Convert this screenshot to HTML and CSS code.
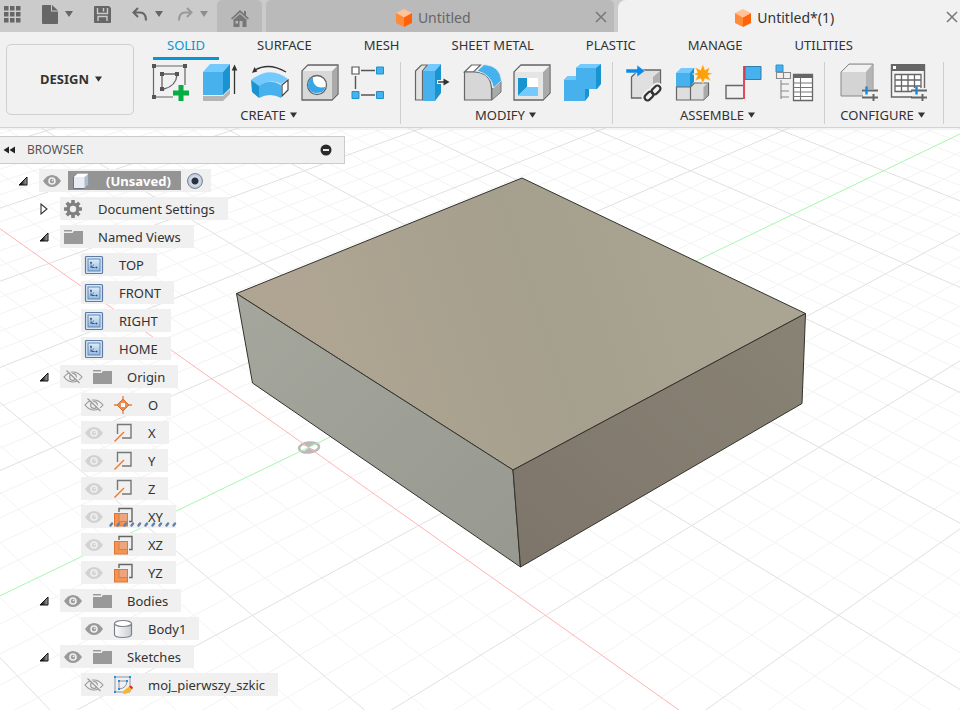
FILE: index.html
```html
<!DOCTYPE html>
<html lang="en">
<head>
  <meta charset="UTF-8">
  <meta name="viewport" content="width=device-width, initial-scale=1">
  <title>Untitled*(1)</title>
  <link rel="stylesheet" href="styles.css">
</head>
<body>
  <!-- shared icons -->
  <svg class="defs" width="0" height="0" aria-hidden="true">
    <defs>
      <linearGradient id="view-fill" x1="0" y1="0" x2="0" y2="1">
        <stop offset="0" stop-color="#dfeefb"/><stop offset="1" stop-color="#8fb9e2"/>
      </linearGradient>
      <linearGradient id="body-fill" x1="0" y1="0" x2="1" y2="0">
        <stop offset="0" stop-color="#fff"/><stop offset="1" stop-color="#c9ccd2"/>
      </linearGradient>
      <linearGradient id="toggle-fill" x1="0" y1="0" x2="1" y2="0">
        <stop offset="0.3" stop-color="#222"/><stop offset="1" stop-color="#aaa"/>
      </linearGradient>
      <symbol id="caret" viewBox="0 0 8 6"><path d="M0 0h8L4 6z" fill="currentColor"/></symbol>
      <symbol id="close" viewBox="0 0 12 12"><path d="M1 1l10 10M11 1L1 11" stroke="currentColor" stroke-width="1.500" fill="none"/></symbol>
      <symbol id="cube" viewBox="0 0 18 18">
        <path d="M9 0l8 4-8 4.500L1 4z" fill="#ffc299"/>
        <path d="M1 4l8 4.500V18l-8-4z" fill="#ff8a3a"/>
        <path d="M17 4L9 8.500V18l8-4z" fill="#ff6208"/>
      </symbol>
      <symbol id="open" viewBox="0 0 10 10"><path d="M9 1v8H1z" fill="url(#toggle-fill)" stroke="#111"/></symbol>
      <symbol id="shut" viewBox="0 0 10 12"><path d="M2 1v10l6-5z" fill="#fff" stroke="#333" stroke-width="1.100"/></symbol>
      <symbol id="eye" viewBox="0 0 20 14">
        <path d="M1 7Q5 1 10 1t9 6q-4 6-9 6T1 7z" fill="currentColor"/>
        <circle cx="10" cy="7" r="3.800" fill="#f0f0f0"/><circle cx="10" cy="7" r="2.200" fill="currentColor"/>
        <circle cx="10.600" cy="6.400" r="0.900" fill="#f0f0f0"/>
      </symbol>
      <symbol id="eye-off" viewBox="0 0 20 14">
        <path d="M1 7Q5 2 10 2t9 5q-4 5-9 5T1 7z" fill="none" stroke="#999" stroke-width="1.200"/>
        <circle cx="10" cy="7" r="3.300" fill="none" stroke="#999" stroke-width="1.200"/>
        <path d="M4.500 0.500l13 12" stroke="#f0f0f0" stroke-width="2"/><path d="M3.500 0.500l13 12.500" stroke="#999" stroke-width="1.200"/>
      </symbol>
      <symbol id="folder" viewBox="0 0 20 16">
        <path d="M1 1h8v1.500H1zM1 4h8.500l1.500-2h9v13H1z" fill="#999"/>
      </symbol>
      <symbol id="gear" viewBox="0 0 20 20">
        <g stroke="#808080" stroke-width="3.600"><path d="M10 1v18M1 10h18M3.700 3.700l12.600 12.600M16.300 3.700L3.700 16.300"/></g>
        <circle cx="10" cy="10" r="6.500" fill="#808080"/><circle cx="10" cy="10" r="3.200" fill="#f0f0f0"/>
      </symbol>
      <symbol id="view" viewBox="0 0 20 20">
        <rect x="1.500" y="1.500" width="17" height="17" rx="1" fill="#d5e7f7" stroke="#5c7ba6" stroke-width="1.200"/>
        <rect x="4" y="4" width="12" height="12" fill="url(#view-fill)" stroke="#6586b0"/>
        <path d="M7 7v5.500h6M7 12.500l3-3" fill="none" stroke="#2d4465" stroke-width="0.900" stroke-dasharray="2.500 .8"/>
        <path d="M6 8.200L7 6.200l1 2zM12 11.500l1.800 1-1.800 1z" fill="#2d4465"/>
      </symbol>
      <symbol id="point" viewBox="0 0 20 20">
        <path d="M10 1v18M1 10h18" stroke="#e58144" stroke-width="1.300"/>
        <path d="M10 4l6 6-6 6-6-6z" fill="#ec8b50" stroke="#d9722f"/><rect x="8" y="8" width="4" height="4" fill="#fff"/>
      </symbol>
      <symbol id="axis" viewBox="0 0 20 20">
        <path d="M4.500 11V1.500h13.500v13.500H9" fill="none" stroke="#777" stroke-width="1.400"/>
        <path d="M1.500 18.500L11 9" stroke="#f07b28" stroke-width="1.400"/>
      </symbol>
      <symbol id="plane" viewBox="0 0 20 20">
        <path d="M6 5V1.500h13v13h-3" fill="none" stroke="#666" stroke-width="1.400"/>
        <rect x="1.500" y="6.500" width="13" height="12.500" fill="#f39354" stroke="#dd7635"/>
        <rect x="6" y="6.500" width="8.500" height="8" fill="#eaa67e" stroke="#dd7635" stroke-width="0.800"/>
      </symbol>
      <symbol id="solid-body" viewBox="0 0 20 20">
        <path d="M1.500 4.500v11c0 4 17 4 17 0v-11" fill="url(#body-fill)" stroke="#7d828a" stroke-width="1.200"/>
        <ellipse cx="10" cy="4.500" rx="8.500" ry="3" fill="#fff" stroke="#7d828a" stroke-width="1.200"/>
      </symbol>
      <symbol id="component" viewBox="0 0 18 18">
        <path d="M1.500 5l4-3.500h11v11l-4 4h-11z" fill="#e8edf4" stroke="#6c7480"/>
        <path d="M12.500 5l4-3.500v11l-4 4z" fill="#b1bac7"/><path d="M2 5h10.500l4-3.500H5.500z" fill="#fff"/>
      </symbol>
      <symbol id="sketch" viewBox="0 0 20 20">
        <path d="M2 2h15v15H2zM6 6h8q0 7-8 8z" fill="none" stroke="#8a96a1" stroke-width="1"/>
        <path d="M1 1h2v2H1zM16 1h2v2h-2zM1 16h2v2H1zM5 5h2v2H5zM13 5h2v2h-2zM5 13h2v2H5z" fill="#1d91e8"/>
        <path d="M10 19l1-3.500 5-4 3 3-5 4z" fill="#f8b52c"/><path d="M16 11.500l2-1 2 2-1 2z" fill="#e02a2a"/>
      </symbol>
    </defs>
  </svg>

  <header class="titlebar">
    <div class="quick-tools">
      <button class="quick grid-btn" aria-label="Data panel">
        <svg width="18" height="18" viewBox="0 0 18 18" fill="#666"><path d="M1 1h4.500v4.500H1zM7 1h4.500v4.500H7zM13 1h4.500v4.500h-4.500zM1 7h4.500v4.500H1zM7 7h4.500v4.500H7zM13 7h4.500v4.500h-4.500zM1 13h4.500v4.500H1zM7 13h4.500v4.500H7zM13 13h4.500v4.500h-4.500z"/></svg>
      </button>
      <button class="quick" aria-label="File">
        <svg width="16" height="19" viewBox="0 0 16 19" fill="#666"><path d="M0 1q0-1 1-1h8v6.500h7V18q0 1-1 1H1q-1 0-1-1z"/><path d="M10 0l6 5.500h-6z"/></svg>
        <svg class="caret" width="8" height="6"><use href="#caret"/></svg>
      </button>
      <button class="quick save-btn" aria-label="Save">
        <svg width="17" height="17" viewBox="0 0 17 17"><path d="M0 1q0-1 1-1h14l2 2v14q0 1-1 1H1q-1 0-1-1z" fill="#666"/><path d="M3.500 2v5.500h10V2M4 15v-4.500h9V15" fill="none" stroke="#cbcbcb" stroke-width="1.400"/><path d="M9.500 2v3.500" stroke="#cbcbcb" stroke-width="1.500"/></svg>
      </button>
      <button class="quick" aria-label="Undo">
        <svg width="16" height="15" viewBox="0 0 16 15"><path d="M6 1L1.500 5.500 6 10M2 5.500h6q6 0 6 8" fill="none" stroke="#666" stroke-width="2"/></svg>
        <svg class="caret" width="8" height="6"><use href="#caret"/></svg>
      </button>
      <button class="quick faded" aria-label="Redo">
        <svg width="16" height="15" viewBox="0 0 16 15"><path d="M10 1l4.500 4.500L10 10M14 5.500H8q-6 0-6 8" fill="none" stroke="#999" stroke-width="2"/></svg>
        <svg class="caret" width="8" height="6"><use href="#caret"/></svg>
      </button>
    </div>
    <nav class="doc-tabs">
      <a class="home-tab" href="#" aria-label="Home">
        <svg width="18" height="17" viewBox="0 0 18 17" fill="#777"><path d="M9 0L0 8.500l1.200 1L9 2.500l7.800 7 1.200-1-3-3V1h-2v2.800z"/><path d="M2.500 9.500L9 4l6.500 5.500V17h-4v-6h-3v6h-6z"/><path d="M4.500 11h2.500v2.500h-2.500z" fill="#bababa"/></svg>
      </a>
      <div class="doc-tab">
        <a class="doc-name" href="#"><svg width="18" height="18"><use href="#cube"/></svg>Untitled</a>
        <button class="close-btn" aria-label="Close Untitled"><svg width="12" height="12"><use href="#close"/></svg></button>
      </div>
      <div class="doc-tab active">
        <a class="doc-name" href="#"><svg width="18" height="18"><use href="#cube"/></svg>Untitled*(1)</a>
        <button class="close-btn" aria-label="Close Untitled*(1)"><svg width="12" height="12"><use href="#close"/></svg></button>
      </div>
    </nav>
  </header>

  <section class="ribbon">
    <button class="workspace">DESIGN <svg width="7" height="6"><use href="#caret"/></svg></button>
    <div class="ribbon-main">
      <nav class="ribbon-tabs">
        <a class="ribbon-tab current" href="#">SOLID</a>
        <a class="ribbon-tab" href="#">SURFACE</a>
        <a class="ribbon-tab" href="#">MESH</a>
        <a class="ribbon-tab" href="#">SHEET METAL</a>
        <a class="ribbon-tab" href="#">PLASTIC</a>
        <a class="ribbon-tab" href="#">MANAGE</a>
        <a class="ribbon-tab" href="#">UTILITIES</a>
      </nav>
      <div class="tool-groups">
        <div class="tool-group">
          <div class="tools">
            <button class="tool" aria-label="Create sketch">
              <svg viewBox="0 0 40 40"><path d="M6 4h27M3.500 6v27M35 6v17M6 35h17" fill="none" stroke="#666" stroke-width="1.200"/><path d="M14 12h11M12 14v11M27 13q-1 11-13 14" fill="none" stroke="#666" stroke-width="1.300"/><path d="M2 2h4v4H2zM33 2h4v4h-4zM2 33h4v4H2zM10 10h4v4h-4zM25 10h4v4h-4zM10 25h4v4h-4z" fill="#555"/><path d="M28.500 23h5v5.500h5.500v5h-5.500v5.500h-5v-5.500h-5.500v-5h5.500z" fill="#06ad43"/></svg>
            </button>
            <button class="tool" aria-label="Extrude">
              <svg viewBox="0 0 40 40"><path d="M3 34h20l7-7v5l-7 7H3z" fill="#b5b5b5"/><path d="M3 10l7-8h20l-7 8z" fill="#74caff"/><path d="M3 10h20v23H3z" fill="#46b1ec"/><path d="M23 10l7-8v24l-7 7z" fill="#1a94d0"/><path d="M34.500 32V5" stroke="#333" stroke-width="1.300"/><path d="M34.500 2.500l2.800 6h-5.600z" fill="#333"/></svg>
            </button>
            <button class="tool" aria-label="Revolve">
              <svg viewBox="0 0 40 40"><path d="M1 18Q20 3 38 17l-7 5q-12-6-22 3z" fill="#74caff"/><path d="M1 18l8 6v12l-7-6z" fill="#1a94d0"/><path d="M9 24q11-8 22-1v13q-11-6-22 0z" fill="#46b1ec"/><path d="M32 23l6-5v10l-6 6z" fill="#fff" stroke="#444" stroke-width="1.200"/><path d="M5 8q14-8 31 2" fill="none" stroke="#333" stroke-width="1.400"/><path d="M2 11l2.500-6 2.800 4.500z" fill="#333"/></svg>
            </button>
            <button class="tool" aria-label="Hole">
              <svg viewBox="0 0 40 40"><path d="M2 9l6-6h30v29l-6 6H2z" fill="#d8d8d8" stroke="#666" stroke-width="1.300"/><path d="M32 9l5-5v28l-5 5z" fill="#aaa"/><path d="M3 9l5-5h29l-5 5z" fill="#f2f2f2"/><circle cx="17" cy="23" r="9.500" fill="#fff" stroke="#666" stroke-width="1.300"/><path d="M13 15c-8 5-6 16 4 16 5 0 8-3 8-6-8 2-13-3-12-10z" fill="#38a7e8"/></svg>
            </button>
            <button class="tool" aria-label="Rectangular pattern">
              <svg viewBox="0 0 40 40"><path d="M11 8.500h14M5.500 14v13M11 33h14" stroke="#555" stroke-width="1.400"/><path d="M2 5h7v7H2z" fill="#fff" stroke="#555" stroke-width="1.200"/><path d="M26.500 5h7v7h-7zM2 29.500h7v7H2zM26.500 29.500h7v7h-7z" fill="#46b1ec" stroke="#1a94d0"/></svg>
            </button>
          </div>
          <button class="group-menu">CREATE <svg width="7" height="6"><use href="#caret"/></svg></button>
        </div>
        <div class="tool-group">
          <div class="tools">
            <button class="tool" aria-label="Press pull">
              <svg viewBox="0 0 40 40"><path d="M3.500 9l6-6h6l-5 6v29h-7z" fill="#e3e3e3" stroke="#666" stroke-width="1.200"/><path d="M11 9l6-7h12l-6 7z" fill="#74caff"/><path d="M11 9h12v30H11z" fill="#46b1ec"/><path d="M23 9l6-7v29l-6 8z" fill="#1a94d0"/><path d="M25 20h8" stroke="#f1f1f1" stroke-width="4"/><path d="M26 20h8" stroke="#333" stroke-width="1.400"/><path d="M31.500 16.500l6 3.500-6 3.500z" fill="#333"/></svg>
            </button>
            <button class="tool" aria-label="Fillet">
              <svg viewBox="0 0 40 40"><path d="M2.500 10l7-7h9l-7 7z" fill="#fff" stroke="#666" stroke-width="1.200"/><path d="M2.500 10h9q17 0 18 16v12h-27z" fill="#d7d7d7" stroke="#666" stroke-width="1.200"/><path d="M30 27l9-8v11l-9 8z" fill="#aaa" stroke="#777"/><path d="M15 9l7-6.500q16 1 17.500 16l-8 7.500Q29 12 15 9z" fill="#46b1ec" stroke="#f1f1f1" stroke-width="0.800"/></svg>
            </button>
            <button class="tool" aria-label="Shell">
              <svg viewBox="0 0 40 40"><path d="M2 10l7-7h29v28l-7 7H2z" fill="#e5e5e5" stroke="#666" stroke-width="1.300"/><path d="M31 10l6-6v27l-6 6z" fill="#aaa"/><path d="M3 10l6-6h28l-6 6z" fill="#f3f3f3"/><path d="M6 16h20v18H6z" fill="#fff"/><path d="M6 16h9v9l-9 9z" fill="#1a94d0"/><path d="M6 34l9-9h11v9z" fill="#74caff"/></svg>
            </button>
            <button class="tool" aria-label="Combine">
              <svg viewBox="0 0 40 40"><path d="M2 18l4-4h8V6l5-4h20v20l-4 5h-8v7l-4 5H2z" fill="#1a94d0"/><path d="M2 18h12V6h20v21H23v12H2z" fill="#46b1ec"/><path d="M2 18l4-4h8v4zM14 6l5-4h20l-5 4z" fill="#74caff"/></svg>
            </button>
          </div>
          <button class="group-menu">MODIFY <svg width="7" height="6"><use href="#caret"/></svg></button>
        </div>
        <div class="tool-group">
          <div class="tools">
            <button class="tool" aria-label="Insert derive">
              <svg viewBox="0 0 40 40"><path d="M7.500 15l7-7h22v19l-8 9h-21z" fill="#e0e0e0" stroke="#666" stroke-width="1.300"/><path d="M29 15l7-6v17l-7 9z" fill="#b0b0b0"/><path d="M2 7h11V3l8 6-8 6v-4H2z" fill="#0a8bea" stroke="#f1f1f1" stroke-width="0.500"/><g fill="none"><g stroke="#f1f1f1" stroke-width="6"><rect x="-5" y="-3" width="10" height="6" rx="3" transform="translate(25 34) rotate(-45)"/><rect x="-5" y="-3" width="10" height="6" rx="3" transform="translate(32 28) rotate(-45)"/></g><g stroke="#333" stroke-width="2.300"><rect x="-5" y="-3" width="10" height="6" rx="3" transform="translate(25 34) rotate(-45)"/><rect x="-5" y="-3" width="10" height="6" rx="3" transform="translate(32 28) rotate(-45)"/></g></g></svg>
            </button>
            <button class="tool" aria-label="New component">
              <svg viewBox="0 0 40 40"><path d="M2 11l5-5h14l-4 5z" fill="#74caff"/><path d="M2 11h14v14H2z" fill="#46b1ec"/><path d="M16 11l4-5v14l-4 5z" fill="#1a94d0"/><path d="M2.500 25h14v13h-14zM16.500 25l4-4h14v12l-5 5h-13z" fill="#dedede" stroke="#666" stroke-width="1.200"/><path d="M29.500 25l4.500-4v12l-4.500 5z" fill="#aaa"/><path d="M29 2l2 6 5-3-2 5.500 5 1-5 2 3 5.500-6-2.500-2 5-2.500-5-5.500 2.500 2.500-5.500-5-1.500 5-1.500-2.500-5.500 5.500 3z" fill="#ffa008" stroke="#f1f1f1" stroke-width="0.600"/></svg>
            </button>
            <button class="tool" aria-label="Joint">
              <svg viewBox="0 0 40 40"><path d="M19 23.500H2v13h17" fill="none" stroke="#666" stroke-width="1.400"/><path d="M21 4.500h16v13H21z" fill="#46b1ec" stroke="#2b7ead"/><path d="M20 4v33" stroke="#e21e35" stroke-width="1.600"/></svg>
            </button>
            <button class="tool" aria-label="Bill of materials">
              <svg viewBox="0 0 40 40"><path d="M2 3h7v7H2z" fill="#46b1ec" stroke="#2794d1"/><path d="M2.500 10.500h7v6h-7zM9.500 10.500h7v6h-7zM7 18v19M7 22h8M7 29h8M7 35h8" fill="none" stroke="#888" stroke-width="1.100"/><path d="M19.500 12.500h19v26h-19z" fill="#fff" stroke="#666" stroke-width="1.300"/><path d="M19 12h20v4H19z" fill="#666"/><path d="M19 21h19M19 25.500h19M19 30h19M19 34.500h19M26.500 16v22" stroke="#777" stroke-width="1.100"/></svg>
            </button>
          </div>
          <button class="group-menu">ASSEMBLE <svg width="7" height="6"><use href="#caret"/></svg></button>
        </div>
        <div class="tool-group wide">
          <div class="tools">
            <button class="tool" aria-label="Configure">
              <svg viewBox="0 0 40 40"><path d="M2 10l8-8h24v27l-4 5H2z" fill="#d4d4d4" stroke="#888"/><path d="M3 10l7-7h23l-6 7z" fill="#f1f1f1"/><path d="M27 10l6-7v25l-6 5z" fill="#b5b5b5"/><path d="M24 27h15v10H24z" fill="#f1f1f1"/><path d="M23 28.500h16M23 35.500h16M34.500 32v7" stroke="#666" stroke-width="2"/><path d="M27.500 24.500v8" stroke="#0a8bea" stroke-width="2.400"/></svg>
            </button>
            <button class="tool" aria-label="Configuration table">
              <svg viewBox="0 0 40 40"><path d="M2.500 3h33v32h-33z" fill="#f5f5f5" stroke="#666" stroke-width="1.400"/><path d="M2 2h34v7H2z" fill="#666"/><path d="M4 4h3v3H4z" fill="#fff"/><path d="M6 12.500h26v17H6zM6 18h26M6 24h26M12.500 12v18M19 12v18M25.500 12v18" fill="#fff" stroke="#666" stroke-width="1.300"/><path d="M23 26h16v11H23z" fill="#f1f1f1"/><path d="M22 28.500h16M22 35.500h16M33.500 32v7" stroke="#666" stroke-width="2"/><path d="M27.500 24.500v8" stroke="#0a8bea" stroke-width="2.400"/></svg>
            </button>
          </div>
          <button class="group-menu">CONFIGURE <svg width="7" height="6"><use href="#caret"/></svg></button>
        </div>
      </div>
    </div>
  </section>

  <main class="viewport">
    <svg class="scene" viewBox="0 128 960 582" preserveAspectRatio="xMidYMid slice" role="img" aria-label="Body1">
      <defs>
        <linearGradient id="face-top" gradientUnits="userSpaceOnUse" x1="330" y1="400" x2="720" y2="270">
          <stop offset="0" stop-color="#afa592"/><stop offset="0.550" stop-color="#a59f8d"/><stop offset="1" stop-color="#aaa493"/>
        </linearGradient>
        <linearGradient id="face-left" x1="0" y1="0" x2="1" y2="1">
          <stop offset="0" stop-color="#a5a79d"/><stop offset="1" stop-color="#97988f"/>
        </linearGradient>
        <linearGradient id="face-right" x1="0" y1="1" x2="1" y2="0">
          <stop offset="0" stop-color="#7e756a"/><stop offset="1" stop-color="#888375"/>
        </linearGradient>
      </defs>
      <path id="grid-minor" class="minor"/>
      <path id="grid-major" class="major"/>
      <g transform="rotate(-6 309 447)">
        <ellipse cx="309" cy="447.500" rx="10" ry="5" fill="none" stroke="#bababa" stroke-width="2.500"/>
        <path d="M309 447.500l-7-4q7-2.500 14 0zM309 447.500l-7 4q7 2.500 14 0z" fill="#bababa"/>
      </g>
      <path id="axis-x" class="axis-x"/>
      <path id="axis-y" class="axis-y"/>
      <g stroke="#33322d" stroke-width="1" stroke-linejoin="round">
        <path d="M522 178L805.500 313.500 513 470 236.500 293.500z" fill="url(#face-top)"/>
        <path d="M236.500 293.500L513 470l7.500 97L252.500 383z" fill="url(#face-left)"/>
        <path d="M513 470l292.500-156.500-3.500 90L520.500 567z" fill="url(#face-right)"/>
      </g>
    </svg>

    <aside class="browser">
      <header class="browser-head">
        <button class="icon-btn" aria-label="Collapse"><svg width="13" height="8" viewBox="0 0 13 8" fill="#222"><path d="M6 0.500v7L0.500 4zM12 0.500v7L6.500 4z"/></svg></button>
        <h2>BROWSER</h2>
        <button class="icon-btn" aria-label="Minimize"><svg width="12" height="12" viewBox="0 0 12 12"><circle cx="6" cy="6" r="5.500" fill="#2b2b2b"/><path d="M3 6h6" stroke="#fff" stroke-width="1.800"/></svg></button>
      </header>

      <ul class="tree">
        <li>
          <div class="row">
            <button class="toggle" aria-label="Collapse document"><svg width="10" height="10"><use href="#open"/></svg></button>
            <div class="item root">
              <button class="eye" aria-label="Hide document"><svg><use href="#eye"/></svg></button>
              <label class="doc-label" for="activate"><svg width="18" height="18"><use href="#component"/></svg>(Unsaved)</label>
              <input class="activate" type="radio" id="activate" name="activate" checked>
            </div>
          </div>
          <ul>
            <li>
              <div class="row">
                <button class="toggle" aria-label="Expand Document Settings"><svg width="10" height="12"><use href="#shut"/></svg></button>
                <div class="item"><svg class="icon"><use href="#gear"/></svg><span>Document Settings</span></div>
              </div>
            </li>
            <li>
              <div class="row">
                <button class="toggle" aria-label="Collapse Named Views"><svg width="10" height="10"><use href="#open"/></svg></button>
                <div class="item"><svg class="icon"><use href="#folder"/></svg><span>Named Views</span></div>
              </div>
              <ul>
                <li class="row leaf"><div class="item"><svg class="icon"><use href="#view"/></svg><span>TOP</span></div></li>
                <li class="row leaf"><div class="item"><svg class="icon"><use href="#view"/></svg><span>FRONT</span></div></li>
                <li class="row leaf"><div class="item"><svg class="icon"><use href="#view"/></svg><span>RIGHT</span></div></li>
                <li class="row leaf"><div class="item"><svg class="icon"><use href="#view"/></svg><span>HOME</span></div></li>
              </ul>
            </li>
            <li>
              <div class="row">
                <button class="toggle" aria-label="Collapse Origin"><svg width="10" height="10"><use href="#open"/></svg></button>
                <div class="item"><button class="eye" aria-label="Show Origin"><svg><use href="#eye-off"/></svg></button><svg class="icon"><use href="#folder"/></svg><span>Origin</span></div>
              </div>
              <ul>
                <li class="row leaf"><div class="item"><button class="eye" aria-label="Show O"><svg><use href="#eye-off"/></svg></button><svg class="icon"><use href="#point"/></svg><span>O</span></div></li>
                <li class="row leaf"><div class="item"><button class="eye dim" aria-label="Hide X"><svg><use href="#eye"/></svg></button><svg class="icon"><use href="#axis"/></svg><span>X</span></div></li>
                <li class="row leaf"><div class="item"><button class="eye dim" aria-label="Hide Y"><svg><use href="#eye"/></svg></button><svg class="icon"><use href="#axis"/></svg><span>Y</span></div></li>
                <li class="row leaf"><div class="item"><button class="eye dim" aria-label="Hide Z"><svg><use href="#eye"/></svg></button><svg class="icon"><use href="#axis"/></svg><span>Z</span></div></li>
                <li class="row leaf"><div class="item"><button class="eye dim" aria-label="Hide XY"><svg><use href="#eye"/></svg></button><svg class="icon"><use href="#plane"/></svg><span>XY</span>
                  <svg class="hatch" width="68" height="5" viewBox="0 0 68 5"><path d="M1.500 3.500l1.500-2m5.500 2l1.500-2m5.500 2l1.500-2m5.500 2l1.500-2m5.500 2l1.500-2m5.500 2l1.500-2m5.500 2l1.500-2m5.500 2l1.500-2m5.500 2l1.500-2m5.500 2l1.500-2" fill="none" stroke="#5f82ac" stroke-width="2.400" stroke-linecap="round"/></svg></div></li>
                <li class="row leaf"><div class="item"><button class="eye dim" aria-label="Hide XZ"><svg><use href="#eye"/></svg></button><svg class="icon"><use href="#plane"/></svg><span>XZ</span></div></li>
                <li class="row leaf"><div class="item"><button class="eye dim" aria-label="Hide YZ"><svg><use href="#eye"/></svg></button><svg class="icon"><use href="#plane"/></svg><span>YZ</span></div></li>
              </ul>
            </li>
            <li>
              <div class="row">
                <button class="toggle" aria-label="Collapse Bodies"><svg width="10" height="10"><use href="#open"/></svg></button>
                <div class="item"><button class="eye" aria-label="Hide Bodies"><svg><use href="#eye"/></svg></button><svg class="icon"><use href="#folder"/></svg><span>Bodies</span></div>
              </div>
              <ul>
                <li class="row leaf"><div class="item"><button class="eye" aria-label="Hide Body1"><svg><use href="#eye"/></svg></button><svg class="icon"><use href="#solid-body"/></svg><span>Body1</span></div></li>
              </ul>
            </li>
            <li>
              <div class="row">
                <button class="toggle" aria-label="Collapse Sketches"><svg width="10" height="10"><use href="#open"/></svg></button>
                <div class="item"><button class="eye" aria-label="Hide Sketches"><svg><use href="#eye"/></svg></button><svg class="icon"><use href="#folder"/></svg><span>Sketches</span></div>
              </div>
              <ul>
                <li class="row leaf"><div class="item"><button class="eye" aria-label="Show moj_pierwszy_szkic"><svg><use href="#eye-off"/></svg></button><svg class="icon"><use href="#sketch"/></svg><span>moj_pierwszy_szkic</span></div></li>
              </ul>
            </li>
          </ul>
        </li>
      </ul>
    </aside>
  </main>
  <script src="grid.js"></script>
</body>
</html>
```

FILE: grid.js
```js
// Ground plane in perspective. u runs along the red axis, v along the green one,
// one unit is a major grid cell.
function project(u, v) {
  const scale = 1 / (0.003917 - 0.0002525 * (u - v));
  const x = 308.5 - 1.485 * (scale - 255.3) + (u + v) / 2 * scale;
  const y = 447.4 + 4.446 * (scale - 255.3);
  return x.toFixed(1) + ' ' + y.toFixed(1);
}

const EXTENT = 7;
const DIVISIONS = 5;

function lineU(u) {
  return 'M' + project(u, -EXTENT) + 'L' + project(u, EXTENT);
}

function lineV(v) {
  return 'M' + project(-EXTENT, v) + 'L' + project(EXTENT, v);
}

let minor = '';
let major = '';
for (let i = -EXTENT * DIVISIONS; i <= EXTENT * DIVISIONS; i++) {
  if (i === 0) continue;
  const lines = lineU(i / DIVISIONS) + lineV(i / DIVISIONS);
  if (i % DIVISIONS === 0) {
    major += lines;
  } else {
    minor += lines;
  }
}

document.getElementById('grid-minor').setAttribute('d', minor);
document.getElementById('grid-major').setAttribute('d', major);
document.getElementById('axis-x').setAttribute('d', lineV(0));
document.getElementById('axis-y').setAttribute('d', lineU(0));
```

FILE: styles.css
```css
* {
  box-sizing: border-box;
}
body {
  display: flex;
  flex-direction: column;
  min-height: 100vh;
  margin: 0;
  overflow: hidden;
  background: #fff;
  color: #333;
  font-family: 'Noto Sans', 'Open Sans', sans-serif;
  font-size: 13px;
  line-height: 18px;
}
svg {
  display: block;
  flex: none;
}
a {
  color: inherit;
  text-decoration: none;
}
button {
  display: flex;
  align-items: center;
  padding: 0;
  border: none;
  background: none;
  color: inherit;
  font: inherit;
  cursor: pointer;
}
ul {
  margin: 0;
  padding: 0;
  list-style: none;
}
.defs {
  position: absolute;
}

/* title bar */
.titlebar {
  display: flex;
  height: 32px;
  background: #cbcbcb;
}
.quick-tools {
  display: flex;
  gap: 21px;
  width: 217px;
  padding: 0 0 4px 3px;
  color: #666;
}
.quick {
  gap: 7px;
}
.faded {
  margin-left: -7px;
  color: #8d8d8d;
}
.doc-tabs {
  display: flex;
  flex: 1;
  gap: 4px;
}
.home-tab {
  display: flex;
  align-items: center;
  justify-content: center;
  width: 45px;
  padding-top: 4px;
  border-radius: 5px 5px 0 0;
  background: #bababa;
}
.doc-tab {
  display: flex;
  flex: 1;
  align-items: center;
  padding: 2px 7px 0 0;
  border-radius: 5px 5px 0 0;
  background: #bababa;
  color: #666;
}
.doc-tab.active {
  padding-right: 2px;
  border-radius: 8px 0 0 0;
  background: #f1f1f1;
  color: #333;
}
.doc-name {
  display: flex;
  flex: 1;
  align-items: center;
  justify-content: center;
  gap: 5px;
  padding: 2px 0 0 5px;
  font-size: 14px;
}
.close-btn {
  color: #777;
}

/* ribbon */
.ribbon {
  position: relative;
  display: flex;
  gap: 6px;
  padding: 4px 6px 3px;
  border-bottom: 1px solid #d4d4d4;
  background: #f1f1f1;
  box-shadow: 0 2px 0 #f4f4f4;
}
.workspace {
  justify-content: center;
  gap: 6px;
  width: 128px;
  height: 71px;
  margin-top: 8px;
  padding: 0 0 2px 2px;
  border: 1px solid #cfcfcf;
  border-radius: 5px;
  font-weight: 700;
}
.ribbon-main {
  flex: 1;
}
.ribbon-tabs {
  display: flex;
  gap: 24px;
  padding-left: 13px;
}
.ribbon-tab {
  padding: 0 14px 3px;
  border-bottom: 3px solid transparent;
}
.ribbon-tab.current {
  border-color: #0696d7;
  color: #0696d7;
}
.tool-groups {
  display: flex;
  margin-top: 2px;
}
.tool-group {
  padding: 0 10px 0 11px;
  border-right: 1px solid #cfcfcf;
}
.tool-group:first-child {
  padding-left: 10px;
}
.tool-group.wide {
  padding: 0 14px;
}
.tools {
  display: flex;
  gap: 10px;
}
.tool svg {
  width: 40px;
  height: 40px;
}
.group-menu {
  gap: 4px;
  margin: 4px auto 0;
  padding-right: 3px;
}

/* canvas and browser panel */
.viewport {
  position: relative;
  flex: 1;
  padding-top: 8px;
}
.scene {
  position: absolute;
  inset: 0;
  width: 100%;
  height: 100%;
}
.minor {
  stroke: #f3f3f3;
}
.major {
  stroke: #e0e0e0;
}
.axis-x {
  stroke: #ffb3b3;
}
.axis-y {
  stroke: #a5f7ae;
}
.browser {
  position: relative;
  width: 345px;
}
.browser-head {
  display: flex;
  align-items: center;
  gap: 11px;
  height: 28px;
  padding: 0 12px 0 3px;
  border: 1px solid #cbcbcb;
  border-left: none;
  background: #f0f0f0;
}
.browser-head h2 {
  flex: 1;
  margin: 0;
  color: #555;
  font-size: 12px;
  font-weight: 400;
}
.tree {
  padding: 5px 0 0 17px;
}
.tree ul {
  padding-left: 21px;
}
.row {
  display: flex;
  align-items: center;
  height: 23px;
  margin-bottom: 5px;
}
.leaf {
  padding-left: 22px;
}
.toggle {
  padding-left: 1px;
  width: 22px;
}
.item {
  position: relative;
  display: flex;
  align-items: center;
  height: 23px;
  padding: 0 13px 0 3px;
  background: #f0f0f0;
}
.item span {
  margin-left: 15px;
}
.icon {
  width: 20px;
  height: 20px;
}
.eye {
  margin-right: 9px;
  color: #999;
}
.eye svg {
  width: 20px;
  height: 14px;
}
.eye.dim {
  color: #d2d2d2;
}
.root {
  padding-right: 8px;
}
.root .eye {
  margin-right: 6px;
}
.doc-label {
  display: flex;
  align-items: center;
  gap: 16px;
  height: 19px;
  padding: 0 10px 0 4px;
  background: #949494;
  color: #fff;
  font-weight: 700;
}
.activate {
  width: 16px;
  height: 16px;
  margin: 0 0 0 6px;
  appearance: none;
  border: 1px solid #7b8494;
  border-radius: 50%;
  background: radial-gradient(circle, #2b3040 3px, #d9e0ec 4px, #bcc6d8 7px);
}
.hatch {
  position: absolute;
  right: -1px;
  bottom: 1px;
}
```
